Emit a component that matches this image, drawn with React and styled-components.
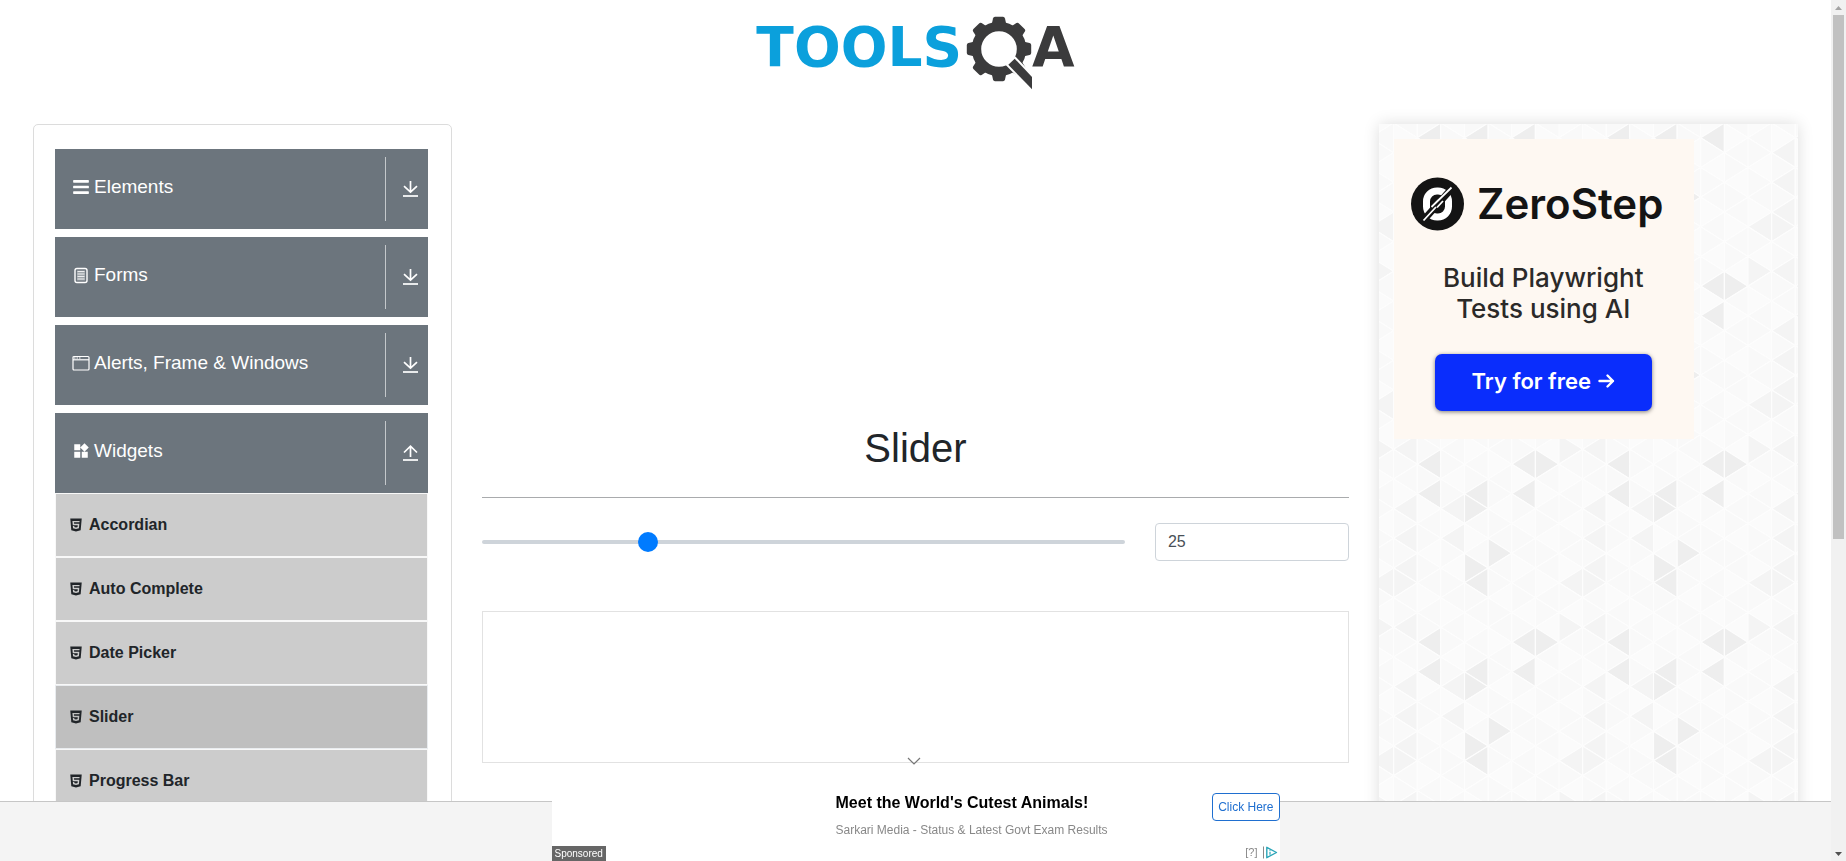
import React, { useState } from "react";
import styled, { createGlobalStyle } from "styled-components";
import { FaBars } from "react-icons/fa";
import { MdWidgets } from "react-icons/md";
import { AiFillHtml5 } from "react-icons/ai";

const GlobalStyle = createGlobalStyle`
  *, *::before, *::after { box-sizing: border-box; }
  body {
    margin: 0;
    overflow: hidden;
    background: #fff;
    color: #212529;
    font: 16px/24px "Liberation Sans", Arial, sans-serif;
  }
  button, input { font: inherit; }
`;

const Shell = styled.div`
  display: flex;
  height: 100vh;
`;

const Page = styled.div`
  flex: 1;
  min-width: 0;
  overflow: hidden;
`;

/* ---------- header ---------- */

const Header = styled.header`
  display: flex;
  justify-content: center;
  height: 124px;
  padding-top: 16px;
`;

const Logo = styled.a`
  display: flex;
  height: 76px;
  font: bold 55px/62px "DejaVu Sans", Verdana, sans-serif;
  color: #0ba0dc;
  text-decoration: none;

  svg {
    margin-left: 4px;
  }
`;

const LogoTail = styled.span`
  color: #3b3b3c;
`;

const teeth = [0, 45, 90, 135, 180, 225, 270, 315];

function GearQ() {
  return (
    <svg width="66" height="76" viewBox="0 0 66 76" aria-hidden="true">
      <g fill="#3b3b3c">
        <circle cx="33" cy="33" r="22.5" fill="none" stroke="#3b3b3c" strokeWidth="9.4" />
        {teeth.map((a) => (
          <path
            key={a}
            d="M25.6 9 L27 2.4 Q27.4 .8 29 .8 H37 Q38.600 .8 39 2.400 L40.400 9 Z"
            transform={`rotate(${a} 33 33)`}
          />
        ))}
        <path
          d="M48.700 42.700 L66 61 V73.200 L42.300 48.700 Z"
          stroke="#fff"
          strokeWidth="4"
        />
        <path d="M48.700 42.700 L66 61 V73.200 L42.300 48.700 Z" />
      </g>
    </svg>
  );
}

/* ---------- page columns ---------- */

const Columns = styled.div`
  display: grid;
  grid-template-columns: repeat(12, minmax(0, 1fr));
  column-gap: 30px;
  padding: 0 33px;
`;

const Sidebar = styled.nav`
  grid-column: span 3;
  padding: 24px 23px 24px 21px;
  border: 1px solid #dcdcdc;
  border-radius: 5px;
`;

const Group = styled.section`
  margin-bottom: 8px;
`;

const GroupHeader = styled.button`
  display: flex;
  width: 100%;
  height: 80px;
  padding: 8px 8px 8px 17px;
  border: 0;
  background: #6c757d;
  color: #fff;
  font-size: 19px;
  text-align: left;
  cursor: pointer;
`;

const GroupTitle = styled.span`
  display: flex;
  flex: 1;
  align-items: center;
  gap: 4px;
  height: 60px;

  svg {
    width: 18px;
    height: 18px;
  }
`;

const GroupToggle = styled.span`
  display: flex;
  align-items: center;
  justify-content: flex-end;
  width: 35px;
  border-left: 1px solid #c4c8cb;
`;

const Items = styled.ul`
  margin: 0;
  padding: 0;
  list-style: none;
`;

const ItemLink = styled.a`
  display: flex;
  align-items: center;
  gap: 5px;
  height: 64px;
  padding: 0 12px;
  border: 1px solid ${(p) => (p.$active ? "#e9ecef" : "#f8f8f8")};
  background: ${(p) => (p.$active ? "#bfbfbf" : "#ccc")};
  color: #212529;
  font-weight: bold;
  text-decoration: none;
`;

const FormIcon = () => (
  <svg viewBox="0 0 18 18" fill="none" stroke="#fff" aria-hidden="true">
    <rect x="3" y="2.500" width="12" height="14" rx="2" strokeWidth="1.400" />
    <rect x="5" y="4.500" width="8" height="10" fill="#fff" fillOpacity=".35" stroke="none" />
    <path d="M5.500 5.500h7M5.500 8h7M5.500 10.500h7M5.500 13h7" strokeWidth="1" opacity=".8" />
  </svg>
);

const WindowIcon = () => (
  <svg viewBox="0 0 18 18" fill="none" stroke="#fff" aria-hidden="true">
    <rect x="1" y="2.500" width="16" height="13.500" rx="1" strokeWidth="1.200" />
    <path d="M1 5.800h16" strokeWidth="1.200" />
    <path d="M2 4h1.500M4.500 4h1.500M7 4h1.500" strokeWidth="1.200" />
  </svg>
);

const ToggleIcon = ({ up }) => (
  <svg width="20" height="20" viewBox="0 0 20 20" fill="none" stroke="#fff" strokeWidth="1.700" aria-hidden="true">
    {up ? <path d="M10.500 14V3.500M4 9.500L10.500 3.200L17 9.500" /> : <path d="M10.500 2V13M4 7.200L10.500 13.200L17 7.200" />}
    <path d="M3 17h15" />
  </svg>
);

const groups = [
  { title: "Elements", Icon: FaBars },
  { title: "Forms", Icon: FormIcon },
  { title: "Alerts, Frame & Windows", Icon: WindowIcon },
  {
    title: "Widgets",
    Icon: MdWidgets,
    items: ["Accordian", "Auto Complete", "Date Picker", "Slider", "Progress Bar"],
  },
];

/* ---------- centre ---------- */

const Content = styled.main`
  grid-column: span 6;
  padding-top: 300px;
`;

const Title = styled.h1`
  margin: 0;
  padding-bottom: 25px;
  border-bottom: 1px solid #a9abad;
  font-size: 40px;
  font-weight: 400;
  line-height: 48px;
  text-align: center;
`;

const SliderRow = styled.form`
  display: grid;
  grid-template-columns: repeat(12, minmax(0, 1fr));
  column-gap: 30px;
  align-items: center;
  margin: 25px 0 50px;
`;

const Range = styled.input`
  grid-column: span 9;
  appearance: none;
  width: 100%;
  height: 20px;
  margin: 0;
  background: transparent;

  &::-webkit-slider-runnable-track {
    height: 4px;
    border-radius: 2px;
    background: #ced4da;
  }
  &::-webkit-slider-thumb {
    appearance: none;
    width: 20px;
    height: 20px;
    margin-top: -8px;
    border-radius: 50%;
    background: #007bff;
  }
`;

const ValueBox = styled.input`
  grid-column: span 3;
  width: 100%;
  height: 38px;
  padding: 0 12px;
  border: 1px solid #ced4da;
  border-radius: 4px;
  background: #fff;
  color: #495057;
`;

const AdFrame = styled.div`
  height: 152px;
  border: 1px solid #e2e2e2;
`;

/* ---------- right column ---------- */

const Rail = styled.aside`
  grid-column: span 3;
  position: relative;
  min-height: 900px;
  padding: 15px;
  background: #fff;
  box-shadow: 0 0 15px #ddd;
`;

const RailPattern = styled.svg`
  position: absolute;
  inset: 0;
  width: 100%;
  height: 100%;
`;

const DARK = "#eeeeee";
const MEDIUM = "#f4f4f4";
const tones = {
  "2,11": DARK, "6,11": DARK, "7,11": DARK, "2,1": DARK, "4,1": DARK,
  "4,2": DARK, "6,1": DARK, "5,5": DARK, "4,6": DARK, "4,7": DARK,
  "1,2": MEDIUM, "0,7": MEDIUM, "1,7": MEDIUM, "0,10": MEDIUM, "1,10": MEDIUM,
  "1,6": MEDIUM, "1,4": MEDIUM, "3,4": MEDIUM, "3,2": MEDIUM,
};
const TILE_W = 189;
const TILE_H = 178;
const COL = TILE_W / 8;
const ROW = TILE_H / 6;

const triangles = [];
for (let c = 0; c < 8; c += 1) {
  for (let h = 0; h <= 12; h += 1) {
    const left = (c + h) % 2 === 1;
    const apex = left ? c * COL : (c + 1) * COL;
    const base = left ? (c + 1) * COL : c * COL;
    const y = (h * ROW) / 2;
    triangles.push({
      key: `${c},${h}`,
      points: `${apex},${y} ${base},${y - ROW / 2} ${base},${y + ROW / 2}`,
      fill: tones[`${c},${h % 12}`] || ((c * 5 + (h % 12) * 7) % 3 ? "#f9f9f9" : "#fbfbfb"),
    });
  }
}

const Promo = styled.a`
  position: relative;
  display: flex;
  flex-direction: column;
  align-items: center;
  width: 300px;
  height: 300px;
  padding-top: 38px;
  background: #fef8f2;
  color: #141414;
  font-family: Inter, sans-serif;
  text-decoration: none;
`;

const Brand = styled.span`
  display: flex;
  align-items: center;
  gap: 13px;
  margin-right: 14px;
  font-size: 42px;
  font-weight: 600;
  line-height: 54px;
`;

const Pitch = styled.span`
  margin-top: 31px;
  margin-right: 2px;
  color: #2b2a29;
  font-size: 26px;
  font-weight: 500;
  line-height: 31px;
  text-align: center;
`;

const PromoAction = styled.span`
  display: flex;
  align-items: center;
  justify-content: center;
  gap: 7px;
  width: 217px;
  height: 57px;
  margin-top: 30px;
  margin-right: 2px;
  padding-bottom: 4px;
  border-radius: 7px;
  background: #0a2dfc;
  box-shadow: 0 1px 4px rgba(0, 0, 0, 0.5);
  color: #fff;
  font-size: 22px;
  font-weight: 600;
`;

function ZeroMark() {
  return (
    <svg width="53" height="54" viewBox="0 0 53 54" aria-hidden="true">
      <circle cx="26.500" cy="27" r="26.500" fill="#141414" />
      <rect x="15.500" y="14" width="22" height="26" rx="10.500" fill="none" stroke="#fff" strokeWidth="7" />
      <path d="M10 46L43 9" stroke="#141414" strokeWidth="7" />
      <path d="M12.500 43.500L25 30M23 27.500L40.500 10.500M20.500 30L27 23.500M26 30.500L32 24" stroke="#fff" strokeWidth="1.800" />
    </svg>
  );
}

/* ---------- bottom ad bar ---------- */

const BottomBar = styled.footer`
  position: fixed;
  right: 15px;
  bottom: 0;
  left: 0;
  display: flex;
  align-items: flex-end;
  justify-content: center;
  height: 60px;
  border-top: 1px solid #c6c6c6;
  background: #f4f4f4;
`;

const Banner = styled.div`
  display: flex;
  flex-shrink: 0;
  width: 728px;
  height: 90px;
  background: #fff;
  line-height: 15px;
`;

const BannerSide = styled.div`
  display: flex;
  align-items: flex-end;
  width: 284px;
`;

const Sponsored = styled.span`
  padding: 0 3px;
  background: #666;
  color: #fff;
  font-size: 10px;
`;

const BannerText = styled.div`
  display: flex;
  flex: 1;
  flex-direction: column;
  gap: 11px;
  padding-top: 23px;
  color: #888;
  font-size: 12px;
`;

const BannerTitle = styled.strong`
  color: #000;
  font-size: 16px;
  line-height: 18px;
`;

const BannerActions = styled.div`
  display: flex;
  flex-direction: column;
  align-items: flex-end;
  justify-content: space-between;
  padding-top: 22px;
`;

const ClickHere = styled.button`
  height: 28px;
  padding: 0 5px;
  border: 1px solid #1f6fd0;
  border-radius: 4px;
  background: #fff;
  color: #1f6fd0;
  font-size: 12px;
  white-space: nowrap;
  cursor: pointer;
`;

const AdInfo = styled.span`
  display: flex;
  align-items: center;
  gap: 4px;
  padding: 0 1px 1px 0;
  color: #888;
  font-size: 11px;
`;

const Collapse = styled.button`
  position: absolute;
  bottom: 93px;
  left: 50%;
  display: flex;
  width: 14px;
  height: 14px;
  margin-left: -9px;
  padding: 0;
  border: 0;
  background: none;
  cursor: pointer;
`;

/* ---------- scroll bar ---------- */

const ScrollTrack = styled.div`
  display: flex;
  flex-direction: column;
  align-items: center;
  width: 15px;
  background: #f1f1f1;
`;

const ScrollArrow = styled.span`
  display: flex;
  align-items: center;
  height: 15px;
`;

const ScrollSpace = styled.div`
  flex: 1;
  width: 11px;
`;

const ScrollThumb = styled.div`
  height: 63%;
  background: #c1c1c1;
`;

export default function App() {
  const [value, setValue] = useState("25");
  return (
    <Shell>
      <GlobalStyle />
      <Page>
        <Header>
          <Logo href="#" aria-label="TOOLSQA">
            <span>TOOLS</span>
            <GearQ />
            <LogoTail>A</LogoTail>
          </Logo>
        </Header>

        <Columns>
          <Sidebar>
            {groups.map(({ title, Icon, items }) => (
              <Group key={title}>
                <GroupHeader type="button" aria-expanded={Boolean(items)}>
                  <GroupTitle>
                    <Icon />
                    {title}
                  </GroupTitle>
                  <GroupToggle>
                    <ToggleIcon up={Boolean(items)} />
                  </GroupToggle>
                </GroupHeader>
                {items && (
                  <Items>
                    {items.map((item) => (
                      <li key={item}>
                        <ItemLink href="#" $active={item === "Slider"}>
                          <AiFillHtml5 size={16} />
                          {item}
                        </ItemLink>
                      </li>
                    ))}
                  </Items>
                )}
              </Group>
            ))}
          </Sidebar>

          <Content>
            <Title>Slider</Title>
            <SliderRow>
              <Range type="range" min="0" max="100" aria-label="Slider" value={value} onChange={(e) => setValue(e.target.value)} />
              <ValueBox type="text" aria-label="Slider value" value={value} onChange={(e) => setValue(e.target.value)} />
            </SliderRow>
            <AdFrame />
          </Content>

          <Rail>
            <RailPattern aria-hidden="true">
              <defs>
                <pattern id="facets" x="-9" y="-1" width={TILE_W} height={TILE_H} patternUnits="userSpaceOnUse">
                  {triangles.map((t) => (
                    <polygon key={t.key} points={t.points} fill={t.fill} stroke="#fdfdfd" strokeWidth="1.200" />
                  ))}
                </pattern>
              </defs>
              <rect width="100%" height="100%" fill="url(#facets)" />
            </RailPattern>
            <Promo href="#">
              <Brand>
                <ZeroMark />
                ZeroStep
              </Brand>
              <Pitch>
                Build Playwright
                <br />
                Tests using AI
              </Pitch>
              <PromoAction>
                Try for free
                <svg width="17" height="16" viewBox="0 0 17 16" fill="none" stroke="#fff" strokeWidth="2.400" strokeLinecap="round" strokeLinejoin="round" aria-hidden="true">
                  <path d="M1.500 8h13.500M9.500 2.500L15 8L9.500 13.500" />
                </svg>
              </PromoAction>
            </Promo>
          </Rail>
        </Columns>
      </Page>

      <ScrollTrack aria-hidden="true">
        <ScrollArrow>
          <svg width="7" height="4" viewBox="0 0 7 4"><path d="M0 4L3.500 0L7 4Z" fill="#a3a3a3" /></svg>
        </ScrollArrow>
        <ScrollSpace>
          <ScrollThumb />
        </ScrollSpace>
        <ScrollArrow>
          <svg width="7" height="4" viewBox="0 0 7 4"><path d="M0 0H7L3.500 4Z" fill="#505050" /></svg>
        </ScrollArrow>
      </ScrollTrack>

      <BottomBar>
        <Collapse type="button" aria-label="Collapse ad">
          <svg width="14" height="14" viewBox="0 0 14 14" fill="none" stroke="#777" strokeWidth="1.200" aria-hidden="true">
            <path d="M1 4L7 10L13 4" />
          </svg>
        </Collapse>
        <Banner>
          <BannerSide>
            <Sponsored>Sponsored</Sponsored>
          </BannerSide>
          <BannerText>
            <BannerTitle>Meet the World's Cutest Animals!</BannerTitle>
            <span>Sarkari Media - Status &amp; Latest Govt Exam Results</span>
          </BannerText>
          <BannerActions>
            <ClickHere type="button">Click Here</ClickHere>
            <AdInfo>
              [?]
              <svg width="17" height="13" viewBox="0 0 17 13" fill="none" aria-hidden="true">
                <path d="M1.500 .5v12" stroke="#888" />
                <path d="M4.800 1.300V11.700L14.500 6.500Z" stroke="#2aa5b8" strokeWidth="1.400" strokeLinejoin="round" />
                <path d="M8 5.800v3M8 3.800v1" stroke="#2aa5b8" strokeWidth="1.200" />
              </svg>
            </AdInfo>
          </BannerActions>
        </Banner>
      </BottomBar>
    </Shell>
  );
}
